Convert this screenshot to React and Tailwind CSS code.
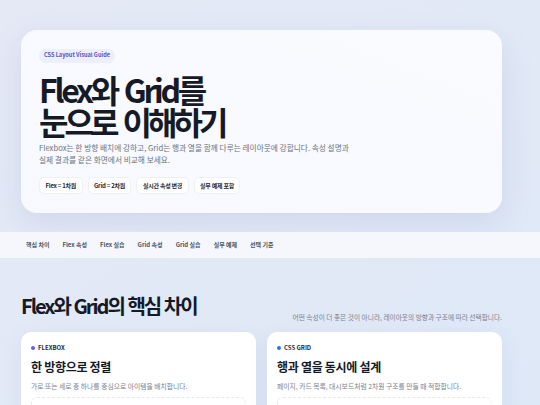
import React from "react";

export default function App() {
  const chips = ["Flex = 1차원", "Grid = 2차원", "실시간 속성 변경", "실무 예제 포함"];
  const nav = ["핵심 차이", "Flex 속성", "Flex 실습", "Grid 속성", "Grid 실습", "실무 예제", "선택 기준"];
  return (
    <div
      className="min-h-[405px] w-[540px] overflow-hidden bg-gradient-to-br from-[#e5e9f6] via-[#e2e9f6] to-[#dde8f7]"
      style={{ fontFamily: '"Noto Sans CJK KR", "Noto Sans", sans-serif' }}
    >
      <div className="pt-[30px] pl-[21px]">
        <div className="w-[481px] rounded-[16px] bg-gradient-to-tr from-[#f7f9fe] to-[#fafbff] pt-[19px] pb-[19px] pl-[18px] shadow-[0_10px_30px_rgba(120,140,190,0.18)]">
          <div className="flex h-[14px] w-fit items-center rounded-full bg-[#eceffc] px-[5px] text-[5.6px] font-bold leading-none text-[#5a4fc4]">
            CSS Layout Visual Guide
          </div>
          <h1 className="mt-[10px] text-[32px] font-bold leading-[32px] text-[#151a26]">
            <span className="block tracking-[-3.3px] [word-spacing:3px]">Flex와 Grid를</span>
            <span className="block tracking-[-4px] [word-spacing:4px]">눈으로 이해하기</span>
          </h1>
          <p className="mt-[5px] w-[380px] text-[7.7px] leading-[12px] text-[#6b7280]">
            Flexbox는 한 방향 배치에 강하고, Grid는 행과 열을 함께 다루는 레이아웃에 강합니다. 속성 설명과
            <br />
            실제 결과를 같은 화면에서 비교해 보세요.
          </p>
          <div className="mt-[11px] flex gap-[5px]">
            {chips.map((c) => (
              <div
                key={c}
                className="flex h-[17px] items-center rounded-[5px] border border-[#eef0f6] bg-white px-[5.5px] text-[6px] font-bold leading-none tracking-[-0.25px] text-[#1f2937]"
              >
                {c}
              </div>
            ))}
          </div>
        </div>
      </div>

      <div className="mt-[19px] flex h-[27px] items-center gap-[13px] border-b border-[#e4e8f2] bg-[#f5f7fd] pl-[26px]">
        {nav.map((n) => (
          <span key={n} className="text-[6px] font-semibold leading-none text-[#4b5563]">
            {n}
          </span>
        ))}
      </div>

      <div className="pl-[21px] pt-[34px]">
        <div className="flex w-[481px] items-end justify-between">
          <h2 className="text-[20px] font-bold leading-[26px] tracking-[-2px] text-[#151a26] [word-spacing:1px]">
            Flex와 Grid의 핵심 차이
          </h2>
          <p className="-mb-[3px] text-[6.7px] leading-[10px] text-[#7b8190]">
            어떤 속성이 더 좋은 것이 아니라, 레이아웃의 방향과 구조에 따라 선택합니다.
          </p>
        </div>
        <div className="mt-[13px] grid w-[481px] grid-cols-2 gap-[11px]">
          <Card
            dot="bg-[#6c5ce7]"
            label="FLEXBOX"
            title="한 방향으로 정렬"
            desc="가로 또는 세로 중 하나를 중심으로 아이템을 배치합니다."
          />
          <Card
            dot="bg-[#1e7fd6]"
            label="CSS GRID"
            title="행과 열을 동시에 설계"
            desc="페이지, 카드 목록, 대시보드처럼 2차원 구조를 만들 때 적합합니다."
          />
        </div>
      </div>
    </div>
  );
}

function Card({ dot, label, title, desc }) {
  return (
    <div className="h-[120px] rounded-[10px] bg-white px-[10px] pt-[13px] shadow-[0_6px_20px_rgba(120,140,190,0.12)]">
      <div className="flex items-center gap-[3px]">
        <span className={`h-[4px] w-[4px] rounded-full ${dot}`} />
        <span className="text-[6px] font-bold leading-none text-[#1f2937]">{label}</span>
      </div>
      <div className="mt-[8px] text-[12px] font-bold leading-[16px] tracking-[-0.3px] text-[#151a26]">{title}</div>
      <div className="mt-[6px] text-[6.8px] leading-[10px] text-[#7b8190]">{desc}</div>
      <div className="mt-[6px] h-[60px] rounded-[6px] border border-dashed border-[#e6e9f1]" />
    </div>
  );
}
